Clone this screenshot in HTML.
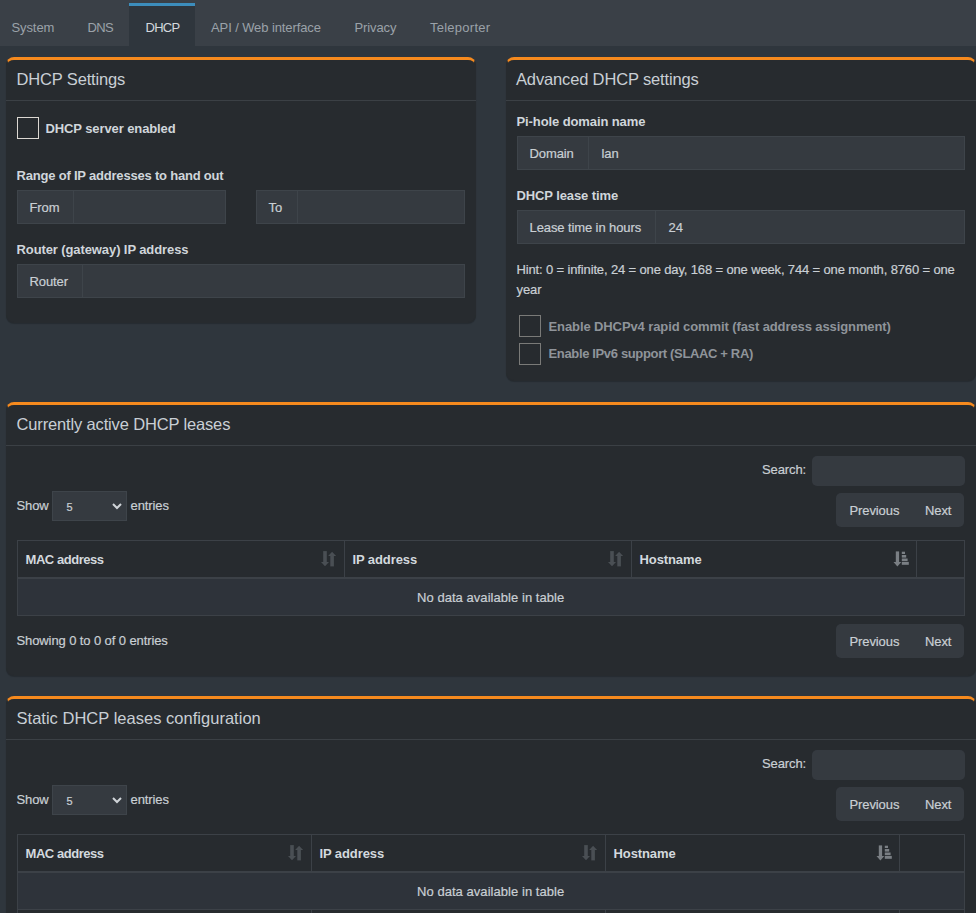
<!DOCTYPE html>
<html><head><meta charset="utf-8">
<style>
*{box-sizing:border-box;margin:0;padding:0}
html,body{width:976px;height:913px;overflow:hidden;background:#2f363d;font-family:"Liberation Sans",sans-serif;color:#c9cfd4;font-size:13px}
.a{position:absolute}
.t{position:absolute;line-height:1;white-space:nowrap;font-size:13px;letter-spacing:-0.1px;-webkit-text-stroke:0.2px currentColor}
.b{font-weight:bold;-webkit-text-stroke:0}
.tabs{left:0;top:0;width:976px;height:46px;background:#3a4047}
.tab{color:#9ba2a9;-webkit-text-stroke:0}
.act{left:129px;top:3px;width:66px;height:43px;background:#2f363d;border-top:3px solid #3c8dbc}
.box{position:absolute;background:#272b2f;border:1px solid #272b2f;border-top:3px solid #f68a1e;border-radius:8px;box-shadow:0 1px 1px rgba(0,0,0,.2)}
.bt{position:absolute;line-height:1;white-space:nowrap;font-size:16.5px;letter-spacing:-0.15px;color:#c9cfd5}
.hb{position:absolute;height:1px;background:#3b4045}
.ig{position:absolute;background:#353a40;border:1px solid #3e444a}
.ad{position:absolute;top:0;bottom:0;left:0;border-right:1px solid #3e444a}
.cb{position:absolute;width:22px;height:22px;border:1px solid #dcd8d2}
.cbd{border-color:#7a7a78}
.lbl{color:#d0d6db}
.dis{color:#8f949a}
.sel{position:absolute;width:75px;height:30px;background:#353a40;border:1px solid #3e444a}
.srch{position:absolute;width:153px;height:30px;background:#353a40;border-radius:5px}
.pg{position:absolute;width:128px;height:34px;background:#353a40;border-radius:5px}
.tbl{position:absolute;border:1px solid #3c4147}
.thr{position:absolute;left:0;right:0;top:0;height:38px;background:#272b2f;border-bottom:2px solid #3c4147}
.tbr{position:absolute;left:0;right:0;top:38px;height:36px;background:#2e333a}
.vs{position:absolute;width:1px;background:#3c4147}
.th{color:#d3d9de}
.si{position:absolute}
</style></head><body>

<svg width="0" height="0" style="position:absolute"><defs>
<g id="su" fill="#4a4f54"><rect x="3.2" y="1.1" width="3.6" height="11.2"/><path d="M1 12 H9 L5 16.3 Z"/><path d="M8.1 6 H16.1 L12.1 1.7 Z"/><rect x="10.3" y="5.6" width="3.6" height="10.8"/></g>
<g id="sa" fill="#7a7f84"><rect x="3.8" y="1.4" width="3.3" height="11"/><path d="M1.5 12 H9.3 L5.4 16.5 Z"/><rect x="9.8" y="1.7" width="3.2" height="2.3"/><rect x="9.8" y="5" width="4.4" height="2.6"/><rect x="9.8" y="8.5" width="5.8" height="2.6"/><rect x="9.8" y="11.9" width="7" height="2.9"/></g>
</defs></svg>
<!-- tabs -->
<div class="a tabs"></div>
<div class="a act"></div>
<div class="t tab" style="left:11.5px;top:21px">System</div>
<div class="t tab" style="left:87.5px;top:21px;letter-spacing:-0.6px">DNS</div>
<div class="t" style="left:145.5px;top:21px;color:#d3d8dd;letter-spacing:-0.75px;-webkit-text-stroke:0">DHCP</div>
<div class="t tab" style="left:211px;top:21px">API / Web interface</div>
<div class="t tab" style="left:354.5px;top:21px">Privacy</div>
<div class="t tab" style="left:430px;top:21px;letter-spacing:0.25px">Teleporter</div>

<!-- box 1 -->
<div class="box" style="left:6px;top:57px;width:470px;height:266px"></div>
<div class="bt" style="left:16.5px;top:71px">DHCP Settings</div>
<div class="hb" style="left:6px;top:100px;width:470px"></div>
<div class="cb" style="left:17px;top:117px"></div>
<div class="t b lbl" style="left:45.5px;top:122px">DHCP server enabled</div>
<div class="t b lbl" style="left:16.5px;top:169px;letter-spacing:-0.2px">Range of IP addresses to hand out</div>
<div class="ig" style="left:17px;top:190px;width:209px;height:34px"><div class="ad" style="width:56px"></div></div>
<div class="t" style="left:29.5px;top:201px">From</div>
<div class="ig" style="left:256px;top:190px;width:209px;height:34px"><div class="ad" style="width:41px"></div></div>
<div class="t" style="left:268.5px;top:201px">To</div>
<div class="t b lbl" style="left:16.5px;top:243px">Router (gateway) IP address</div>
<div class="ig" style="left:17px;top:264px;width:448px;height:34px"><div class="ad" style="width:65px"></div></div>
<div class="t" style="left:29.5px;top:275px">Router</div>

<!-- box 2 -->
<div class="box" style="left:506px;top:57px;width:470px;height:324px"></div>
<div class="bt" style="left:516px;top:71px">Advanced DHCP settings</div>
<div class="hb" style="left:506px;top:100px;width:470px"></div>
<div class="t b lbl" style="left:516.5px;top:115px">Pi-hole domain name</div>
<div class="ig" style="left:517px;top:136px;width:448px;height:34px"><div class="ad" style="width:71px"></div></div>
<div class="t" style="left:529.5px;top:147px">Domain</div>
<div class="t" style="left:601.5px;top:147px">lan</div>
<div class="t b lbl" style="left:516.5px;top:189px">DHCP lease time</div>
<div class="ig" style="left:517px;top:210px;width:448px;height:34px"><div class="ad" style="width:138px"></div></div>
<div class="t" style="left:529.5px;top:221px">Lease time in hours</div>
<div class="t" style="left:668.5px;top:221px">24</div>
<div class="t" style="left:516.5px;top:263px;letter-spacing:-0.14px">Hint: 0 = infinite, 24 = one day, 168 = one week, 744 = one month, 8760 = one</div>
<div class="t" style="left:516.5px;top:283px">year</div>
<div class="cb cbd" style="left:519px;top:315px"></div>
<div class="t b dis" style="left:548.5px;top:320px">Enable DHCPv4 rapid commit (fast address assignment)</div>
<div class="cb cbd" style="left:519px;top:343px"></div>
<div class="t b dis" style="left:548.5px;top:347px;letter-spacing:-0.35px">Enable IPv6 support (SLAAC + RA)</div>

<!-- box 3 -->
<div class="box" style="left:6px;top:402px;width:970px;height:274px"></div>
<div class="bt" style="left:16.5px;top:416px">Currently active DHCP leases</div>
<div class="hb" style="left:6px;top:445px;width:970px"></div>
<div class="t" style="left:762px;top:463px">Search:</div>
<div class="srch" style="left:812px;top:456px"></div>
<div class="t" style="left:16.5px;top:499px">Show</div>
<div class="sel" style="left:52px;top:491px"></div>
<div class="t" style="left:66.5px;top:502px;font-size:11px">5</div>
<svg class="a" style="left:112px;top:503px" width="10" height="7" viewBox="0 0 10 7"><path d="M1 1 L5 5 L9 1" stroke="#d0d4d8" stroke-width="2" fill="none"/></svg>
<div class="t" style="left:130.5px;top:499px">entries</div>
<div class="pg" style="left:836px;top:493px"></div>
<div class="t" style="left:849.5px;top:504px">Previous</div>
<div class="t" style="left:925px;top:504px">Next</div>
<div class="tbl" style="left:17px;top:540px;width:948px;height:76px">
  <div class="thr"></div><div class="tbr"></div>
  <div class="vs" style="left:326px;top:0;height:36px"></div>
  <div class="vs" style="left:613px;top:0;height:36px"></div>
  <div class="vs" style="left:898px;top:0;height:36px"></div>
</div>
<svg class="a" style="left:320px;top:550px" width="18" height="18"><use href="#su"/></svg>
<svg class="a" style="left:607px;top:550px" width="18" height="18"><use href="#su"/></svg>
<svg class="a" style="left:892px;top:550px" width="18" height="18"><use href="#sa"/></svg>
<div class="t b th" style="left:25.5px;top:553px;letter-spacing:-0.45px">MAC address</div>
<div class="t b th" style="left:352.5px;top:553px">IP address</div>
<div class="t b th" style="left:639.5px;top:553px">Hostname</div>
<div class="t" style="left:417px;top:591px;letter-spacing:0.05px">No data available in table</div>
<div class="t" style="left:16.5px;top:634px">Showing 0 to 0 of 0 entries</div>
<div class="pg" style="left:836px;top:624px"></div>
<div class="t" style="left:849.5px;top:635px">Previous</div>
<div class="t" style="left:925px;top:635px">Next</div>

<!-- box 4 -->
<div class="box" style="left:6px;top:696px;width:970px;height:240px"></div>
<div class="bt" style="left:16.5px;top:710px;letter-spacing:0.02px">Static DHCP leases configuration</div>
<div class="hb" style="left:6px;top:739px;width:970px"></div>
<div class="t" style="left:762px;top:757px">Search:</div>
<div class="srch" style="left:812px;top:750px"></div>
<div class="t" style="left:16.5px;top:793px">Show</div>
<div class="sel" style="left:52px;top:785px"></div>
<div class="t" style="left:66.5px;top:796px;font-size:11px">5</div>
<svg class="a" style="left:112px;top:797px" width="10" height="7" viewBox="0 0 10 7"><path d="M1 1 L5 5 L9 1" stroke="#d0d4d8" stroke-width="2" fill="none"/></svg>
<div class="t" style="left:130.5px;top:793px">entries</div>
<div class="pg" style="left:836px;top:787px"></div>
<div class="t" style="left:849.5px;top:798px">Previous</div>
<div class="t" style="left:925px;top:798px">Next</div>
<div class="tbl" style="left:17px;top:834px;width:948px;height:120px">
  <div class="thr"></div><div class="tbr"></div>
  <div class="vs" style="left:293px;top:0;height:36px"></div>
  <div class="vs" style="left:587px;top:0;height:36px"></div>
  <div class="vs" style="left:881px;top:0;height:36px"></div>
  <div class="a" style="left:0;right:0;top:74px;height:1px;background:#3c4147"></div>
  <div class="vs" style="left:293px;top:75px;height:40px"></div>
  <div class="vs" style="left:587px;top:75px;height:40px"></div>
  <div class="vs" style="left:881px;top:75px;height:40px"></div>
</div>
<svg class="a" style="left:287px;top:844px" width="18" height="18"><use href="#su"/></svg>
<svg class="a" style="left:581px;top:844px" width="18" height="18"><use href="#su"/></svg>
<svg class="a" style="left:874.5px;top:844px" width="18" height="18"><use href="#sa"/></svg>
<div class="t b th" style="left:25.5px;top:847px;letter-spacing:-0.45px">MAC address</div>
<div class="t b th" style="left:319.5px;top:847px">IP address</div>
<div class="t b th" style="left:613.5px;top:847px">Hostname</div>
<div class="t" style="left:417px;top:885px;letter-spacing:0.05px">No data available in table</div>

</body></html>
